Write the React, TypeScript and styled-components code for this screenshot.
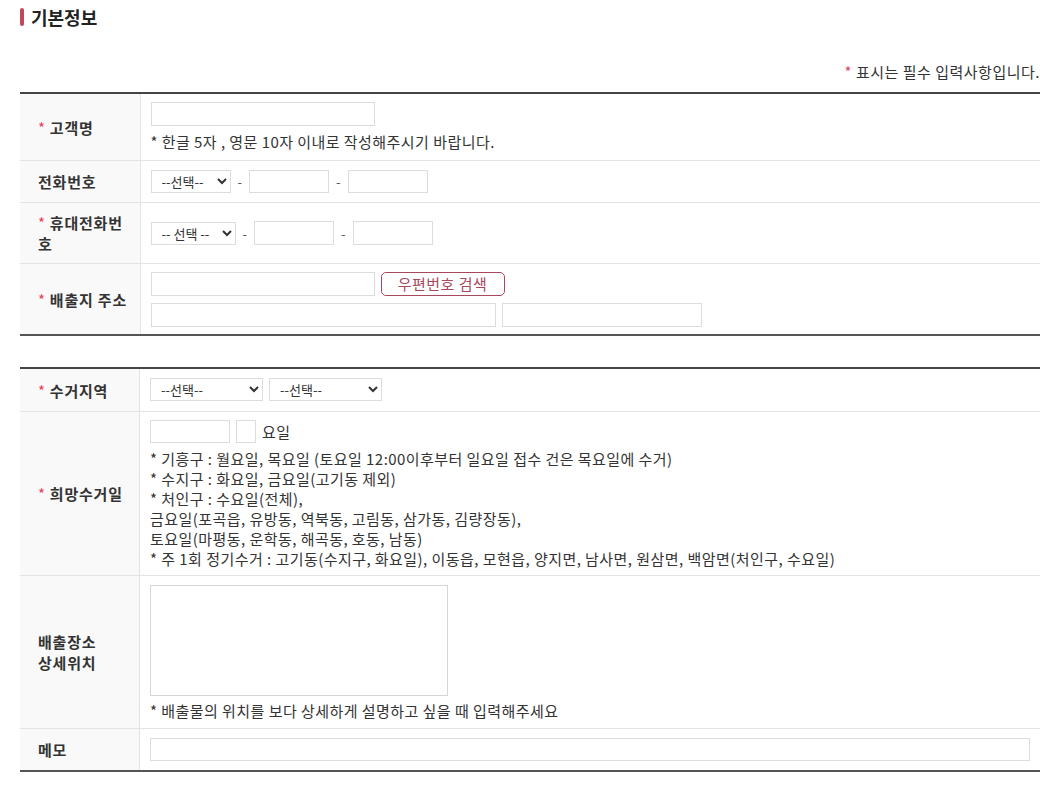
import React from 'react';
import styled, { createGlobalStyle } from 'styled-components';

const GlobalStyle = createGlobalStyle`
  html, body { margin: 0; padding: 0; background: #fff; }
  body {
    font-family: "Noto Sans CJK KR", "Noto Sans", sans-serif;
    color: #333;
    font-size: 15px;
  }
  * { box-sizing: border-box; }
`;

const Page = styled.div`
  padding: 4px 18px 20px 20px;
`;

const Title = styled.h3`
  display: flex;
  align-items: center;
  gap: 7px;
  margin: 0;
  font-size: 18px;
  font-weight: 700;
  color: #222;
  line-height: 26px;

  &::before {
    content: '';
    width: 4px;
    height: 18px;
    border-radius: 2px;
    background: #c0485b;
  }
`;

const Note = styled.p`
  margin: 32px 0 10px;
  text-align: right;
  font-size: 15px;
  letter-spacing: 0.5px;
  line-height: 20px;
  color: #333;
`;

const Star = styled.span`
  color: #e0475c;
  font-weight: 400;
  margin-right: 4px;
`;

const Table = styled.table<{ $gap?: boolean }>`
  width: 100%;
  border-collapse: collapse;
  border-top: 2px solid #444;
  border-bottom: 2px solid #555;
  margin-top: ${({ $gap }) => ($gap ? '31px' : '0')};
`;

const Row = styled.tr`
  & + & > * { border-top: 1px solid #e3e3e3; }
`;

const Label = styled.th<{ $nowrap?: boolean; $py?: number }>`
  width: 120px;
  padding: ${({ $py }) => $py ?? 9}px 10px ${({ $py }) => $py ?? 9}px 18px;
  background: #f9f9f9;
  border-right: 1px solid #e3e3e3;
  text-align: left;
  font-size: 15px;
  font-weight: 700;
  letter-spacing: 0.8px;
  line-height: 21px;
  color: #333;
  vertical-align: middle;
  white-space: ${({ $nowrap }) => ($nowrap ? 'nowrap' : 'normal')};
`;

const Cell = styled.td<{ $pad?: string }>`
  padding: ${({ $pad }) => $pad || '8px 10px'};
  vertical-align: middle;
`;

const Line = styled.div`
  display: flex;
  align-items: center;
  gap: 6px;
  & + & { margin-top: 7px; }
`;

const Input = styled.input<{ $w: number; $h?: number }>`
  width: ${({ $w }) => $w}px;
  height: ${({ $h }) => $h ?? 24}px;
  border: 1px solid #dcdcdc;
  background: #fff;
  padding: 0 6px;
  font: inherit;
  outline: none;
`;

const Select = styled.select<{ $w: number }>`
  width: ${({ $w }) => $w}px;
  height: 23px;
  border: 1px solid #dcdcdc;
  background: #fff;
  padding: 0 4px 0 6px;
  font-family: inherit;
  font-size: 13px;
  color: #333;
`;

const Dash = styled.span`
  color: #555;
  font-size: 13px;
  padding: 0 1px;
`;

const Hint = styled.p<{ $mt?: number }>`
  margin: ${({ $mt }) => $mt ?? 6}px 0 0;
  font-size: 15px;
  letter-spacing: 0.45px;
  line-height: 20px;
  color: #333;
`;

const ZipButton = styled.button`
  height: 24px;
  width: 124px;
  border: 1px solid #a8485c;
  border-radius: 5px;
  background: #fff;
  color: #a8485c;
  font-family: inherit;
  font-size: 15px;
  letter-spacing: 0.5px;
  line-height: 20px;
  padding: 0;
`;

const TextArea = styled.textarea`
  display: block;
  width: 298px;
  height: 111px;
  border: 1px solid #d6d6d6;
  resize: none;
  font: inherit;
  outline: none;
`;

const Suffix = styled.span`
  font-size: 15px;
  letter-spacing: 0.4px;
  color: #333;
`;

export default function App() {
  return (
    <Page>
      <GlobalStyle />
      <Title>기본정보</Title>
      <Note>
        <Star>*</Star>표시는 필수 입력사항입니다.
      </Note>

      <Table>
        <tbody>
          <Row>
            <Label><Star>*</Star>고객명</Label>
            <Cell $pad="8px 10px 8px">
              <Input $w={224} />
              <Hint>* 한글 5자 , 영문 10자 이내로 작성해주시기 바랍니다.</Hint>
            </Cell>
          </Row>
          <Row>
            <Label $py={10}>전화번호</Label>
            <Cell>
              <Line>
                <Select $w={80}><option>--선택--</option></Select>
                <Dash>-</Dash>
                <Input $w={80} $h={23} />
                <Dash>-</Dash>
                <Input $w={80} $h={23} />
              </Line>
            </Cell>
          </Row>
          <Row>
            <Label><Star>*</Star>휴대전화번호</Label>
            <Cell>
              <Line>
                <Select $w={85}><option>-- 선택 --</option></Select>
                <Dash>-</Dash>
                <Input $w={80} />
                <Dash>-</Dash>
                <Input $w={80} />
              </Line>
            </Cell>
          </Row>
          <Row>
            <Label $nowrap><Star>*</Star>배출지 주소</Label>
            <Cell $pad="8px 10px 7px">
              <Line>
                <Input $w={224} />
                <ZipButton type="button">우편번호 검색</ZipButton>
              </Line>
              <Line>
                <Input $w={345} />
                <Input $w={200} />
              </Line>
            </Cell>
          </Row>
        </tbody>
      </Table>

      <Table $gap>
        <tbody>
          <Row>
            <Label><Star>*</Star>수거지역</Label>
            <Cell $pad="9px 10px 10px">
              <Line>
                <Select $w={113}><option>--선택--</option></Select>
                <Select $w={113}><option>--선택--</option></Select>
              </Line>
            </Cell>
          </Row>
          <Row>
            <Label><Star>*</Star>희망수거일</Label>
            <Cell $pad="8px 10px 6px">
              <Line>
                <Input $w={80} $h={23} />
                <Input $w={20} $h={23} />
                <Suffix>요일</Suffix>
              </Line>
              <Hint $mt={6}>
                * 기흥구 : 월요일, 목요일 (토요일 12:00이후부터 일요일 접수 건은 목요일에 수거)<br />
                * 수지구 : 화요일, 금요일(고기동 제외)<br />
                * 처인구 : 수요일(전체),<br />
                금요일(포곡읍, 유방동, 역북동, 고림동, 삼가동, 김량장동),<br />
                토요일(마평동, 운학동, 해곡동, 호동, 남동)<br />
                * 주 1회 정기수거 : 고기동(수지구, 화요일), 이동읍, 모현읍, 양지면, 남사면, 원삼면, 백암면(처인구, 수요일)
              </Hint>
            </Cell>
          </Row>
          <Row>
            <Label>배출장소<br />상세위치</Label>
            <Cell $pad="9px 10px 7px">
              <TextArea />
              <Hint $mt={5}>* 배출물의 위치를 보다 상세하게 설명하고 싶을 때 입력해주세요</Hint>
            </Cell>
          </Row>
          <Row>
            <Label>메모</Label>
            <Cell $pad="9px 10px">
              <Input $w={880} $h={23} />
            </Cell>
          </Row>
        </tbody>
      </Table>
    </Page>
  );
}
